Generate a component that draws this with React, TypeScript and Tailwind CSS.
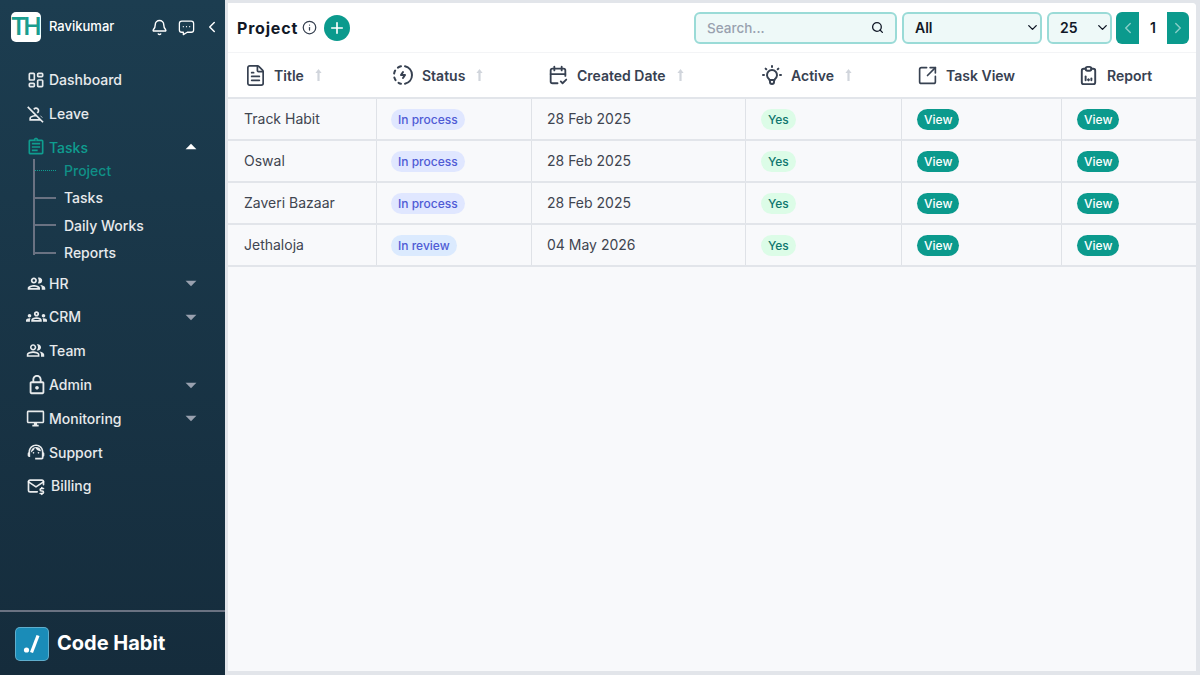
import type { ReactNode } from "react";
import { Bell, ChevronDown, ChevronLeft, ChevronRight, FileText, Info, Plus, Search, SquareArrowOutUpRight } from "lucide-react";
import {
    MdOutlineAssignment,
    MdOutlineDesktopWindows,
    MdOutlineGroups,
    MdOutlineLock,
    MdOutlinePeople,
    MdOutlinePeopleAlt,
    MdOutlinePersonOff,
    MdOutlineSupportAgent,
    MdArrowDropDown,
    MdArrowDropUp,
} from "react-icons/md";
import { TbBulb, TbCalendarCheck, TbClipboardData, TbLayoutDashboard, TbMailDollar, TbMessageDots, TbProgressBolt } from "react-icons/tb";

const font = { fontFamily: "Inter, 'Noto Sans', sans-serif" };

const NavItem = ({ icon, label, caret, gap }: { icon: ReactNode; label: string; caret?: boolean; gap?: string }) => (
    <div className="flex items-center h-[33.8px] pl-[26px] pr-[25px] text-white/90">
        <span className={`${gap ?? "w-[23px]"} flex items-center text-[20px] [&>svg]:shrink-0`}>{icon}</span>
        <span className="text-[14px] font-medium flex-1">{label}</span>
        {caret && <MdArrowDropDown className="text-[26px] text-gray-400 -mr-[4px]" />}
    </div>
);

const SubItem = ({ label, active }: { label: string; active?: boolean }) => (
    <div className={`flex items-center h-[27.4px] ${active ? "text-[#0f9087]" : "text-white/90"}`}>
        <span className={`w-[22px] ml-[34px] mr-[8px] ${active ? "border-t border-dotted border-[#0f9d8f]" : "border-t-2 border-gray-500"}`} />
        <span className="text-[14px] font-medium">{label}</span>
    </div>
);

const SortArrow = () => (
    <svg width="9" height="12" viewBox="0 0 9 12" className="ml-[10px] text-gray-300" fill="currentColor">
        <path d="M4.5 0 L7.6 4 H5.6 V12 H3.4 V4 H1.4 Z" />
    </svg>
);

const Th = ({ icon, label, sort, pad }: { icon: ReactNode; label: string; sort?: boolean; pad: string }) => (
    <div className={`flex items-center ${pad} text-[#374151]`}>
        <span className="w-[22px] mr-[8px] flex justify-center [&>svg]:shrink-0">{icon}</span>
        <span className="text-[14px] font-semibold whitespace-nowrap">{label}</span>
        {sort && <SortArrow />}
    </div>
);

const Pill = ({ children, className }: { children: ReactNode; className: string }) => (
    <span className={`inline-flex items-center h-[21px] mt-[1px] px-[7px] rounded-full text-[12px] font-medium ${className}`}>{children}</span>
);

const Picker = ({ value, width }: { value: string; width: string }) => (
    <div className={`ml-[5px] flex items-center ${width} h-[32px] pl-[11px] rounded-[6px] border-2 border-[#9adbd7] bg-[#eef9f8] text-[14px] font-semibold text-[#111827]`}>
        <span className="flex-1">{value}</span>
        <ChevronDown size={15} strokeWidth={2.2} />
    </div>
);

const rows = [
    { title: "Track Habit", status: "In process", date: "28 Feb 2025" },
    { title: "Oswal", status: "In process", date: "28 Feb 2025" },
    { title: "Zaveri Bazaar", status: "In process", date: "28 Feb 2025" },
    { title: "Jethaloja", status: "In review", date: "04 May 2026" },
];

const cols = "grid grid-cols-[149px_155px_214px_156px_160px_134px]";

export default function App() {
    return (
        <div className="flex h-[675px] w-[1200px] overflow-hidden bg-[#e2e5ea]" style={font}>
            <aside className="w-[225px] shrink-0 flex flex-col bg-gradient-to-b from-[#1c3d50] to-[#152c3c]">
                <div className="flex items-center h-[54px] pl-[11px] pr-[9px] text-white">
                    <div className="w-[30px] h-[30px] rounded-[5px] bg-white flex items-center justify-center">
                        <span className="text-[#1a9d8f] text-[24px] font-semibold tracking-[-3px] pr-[3px] leading-none">TH</span>
                    </div>
                    <span className="ml-[8px] text-[13px] font-medium flex-1">Ravikumar</span>
                    <Bell size={17} className="mr-[9px]" />
                    <TbMessageDots size={19} className="mr-[7px]" strokeWidth={1.6} />
                    <ChevronLeft size={18} className="-mr-[5px]" />
                </div>
                <nav className="pt-[9px]">
                    <NavItem icon={<TbLayoutDashboard />} label="Dashboard" />
                    <NavItem icon={<MdOutlinePersonOff />} label="Leave" />
                    <div className="flex items-center h-[33.8px] pl-[26px] pr-[25px] text-[#0f9d8f]">
                        <span className="w-[23px] flex items-center text-[20px]"><MdOutlineAssignment /></span>
                        <span className="text-[14px] font-medium flex-1">Tasks</span>
                        <MdArrowDropUp className="text-[26px] text-white -mr-[4px]" />
                    </div>
                    <div className="relative -mt-[7.7px] before:absolute before:left-[33px] before:top-[2px] before:bottom-[11px] before:w-[2px] before:bg-gray-500">
                        <SubItem label="Project" active />
                        <SubItem label="Tasks" />
                        <SubItem label="Daily Works" />
                        <SubItem label="Reports" />
                    </div>
                    <NavItem icon={<MdOutlinePeople size={21} />} label="HR" caret />
                    <NavItem icon={<MdOutlineGroups size={21} />} label="CRM" caret />
                    <NavItem icon={<MdOutlinePeopleAlt size={19} />} label="Team" />
                    <NavItem icon={<MdOutlineLock size={22} />} label="Admin" caret />
                    <NavItem icon={<MdOutlineDesktopWindows size={19} />} label="Monitoring" caret />
                    <NavItem icon={<MdOutlineSupportAgent />} label="Support" />
                    <NavItem icon={<TbMailDollar />} label="Billing" gap="w-[25px]" />
                </nav>
                <div className="mt-auto h-[65px] border-t-2 border-gray-500 flex items-center pl-[15px]">
                    <div className="w-[34px] h-[34px] rounded-[5px] bg-[#1a8cb8] border border-white/30 flex items-center justify-center">
                        <svg width="24" height="24" viewBox="0 0 24 24" fill="none">
                            <circle cx="6.5" cy="18" r="2.6" fill="#fff" />
                            <path d="M18 3.5 L11.5 20.5" stroke="#fff" strokeWidth="3.2" />
                        </svg>
                    </div>
                    <span className="ml-[8px] pb-[2px] text-white text-[20px] font-bold">Code Habit</span>
                </div>
            </aside>

            <main className="flex-1 mt-[3px] mb-[4px] ml-[3px] mr-[4px] rounded-tr-[4px] bg-[#f8f9fb] overflow-hidden">
                <header className="flex items-center h-[50px] bg-white border-b border-gray-100 pl-[9px] pr-[7px]">
                    <h1 className="text-[16px] font-bold text-[#111827] tracking-[0.8px]">Project</h1>
                    <Info size={15} className="ml-[4px] text-[#374151]" />
                    <button className="ml-[7px] w-[26px] h-[26px] rounded-full bg-[#0b9a8d] text-white flex items-center justify-center">
                        <Plus size={18} strokeWidth={2.2} />
                    </button>
                    <div className="ml-auto flex items-center w-[203px] h-[32px] pl-[11px] pr-[11px] rounded-[6px] border-2 border-[#9adbd7] bg-[#eef9f8]">
                        <span className="flex-1 pt-[1px] text-[13.5px] font-medium text-gray-400">Search...</span>
                        <Search size={13} strokeWidth={2.4} className="text-[#111827]" />
                    </div>
                    <Picker value="All" width="w-[140px]" />
                    <Picker value="25" width="w-[65px]" />
                    <div className="ml-[4px] flex h-[32px] w-[73px] rounded-[6px] overflow-hidden">
                        <span className="w-[23px] bg-[#0b9a8d] flex items-center justify-center text-white/50"><ChevronLeft size={18} /></span>
                        <span className="flex-1 bg-white flex items-center justify-center text-[14px] font-semibold text-[#111827]">1</span>
                        <span className="w-[22px] bg-[#0b9a8d] flex items-center justify-center text-white/50"><ChevronRight size={18} /></span>
                    </div>
                </header>

                <div className={`${cols} h-[46px] bg-white border-b-2 border-[#e2e5ea]`}>
                    <Th pad="pl-4" icon={<FileText size={23} strokeWidth={1.8} />} label="Title" sort />
                    <Th pad="pl-[15px]" icon={<TbProgressBolt size={24} />} label="Status" sort />
                    <Th pad="pl-[15px]" icon={<TbCalendarCheck size={22} />} label="Created Date" sort />
                    <Th pad="pl-[15px]" icon={<TbBulb size={24} />} label="Active" sort />
                    <Th pad="pl-[14px]" icon={<SquareArrowOutUpRight size={21} strokeWidth={1.9} />} label="Task View" />
                    <Th pad="pl-[15px]" icon={<TbClipboardData size={23} />} label="Report" />
                </div>

                {rows.map((r) => (
                    <div key={r.title} className={`${cols} h-[42px] border-b-2 border-[#e2e5ea] text-[14px] text-[#3f4550]`}>
                        <div className="flex items-center pl-4 pb-[2px] border-r border-[#dfe2e7]">{r.title}</div>
                        <div className="flex items-center pl-[14px] border-r border-[#dfe2e7]">
                            <Pill className={`${r.status === "In review" ? "bg-[#dbeafe]" : "bg-[#e0e7ff]"} text-[#4f5bd5]`}>{r.status}</Pill>
                        </div>
                        <div className="flex items-center pl-[15px] pb-[2px] border-r border-[#dfe2e7]">{r.date}</div>
                        <div className="flex items-center pl-[15px] border-r border-[#dfe2e7]">
                            <Pill className="bg-[#dcfce7] text-[#0f766e]">Yes</Pill>
                        </div>
                        <div className="flex items-center pl-[15px] border-r border-[#dfe2e7]">
                            <Pill className="bg-[#0b9a8d] text-white">View</Pill>
                        </div>
                        <div className="flex items-center pl-[15px]">
                            <Pill className="bg-[#0b9a8d] text-white">View</Pill>
                        </div>
                    </div>
                ))}
            </main>
        </div>
    );
}
